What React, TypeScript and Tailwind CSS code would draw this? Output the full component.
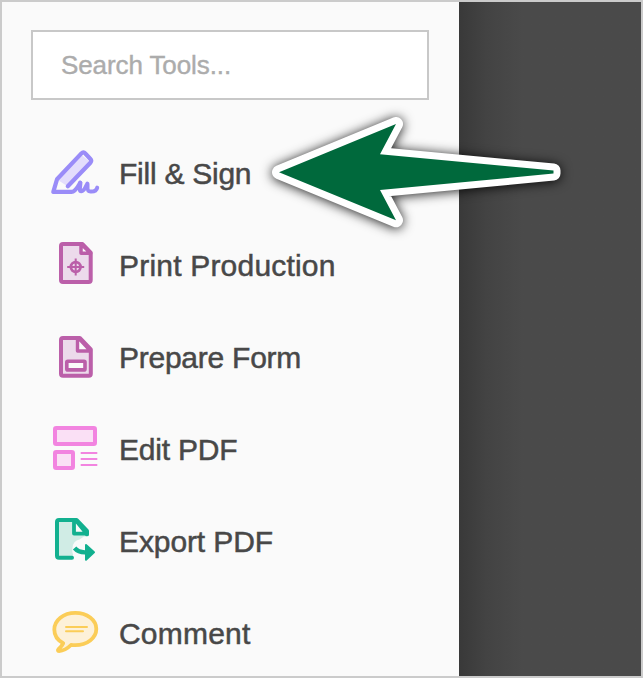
import type { ReactNode } from "react";

function Icon({ color, children }: { color: string; children: ReactNode }) {
  return (
    <svg
      width="60"
      height="60"
      viewBox="0 0 60 60"
      fill="none"
      stroke={color}
      strokeWidth="4"
      strokeLinecap="round"
      strokeLinejoin="round"
      className="shrink-0"
    >
      {children}
    </svg>
  );
}

const tools: { label: string; tracking: string; icon: ReactNode }[] = [
  {
    label: "Fill & Sign",
    tracking: "tracking-[-0.25px]",
    icon: (
      <Icon color="#9a8cf8">
        <path d="M12 35.5 35.5 10 45.5 18.5 23 42.5Z" fill="#e3ddfc" stroke="none" />
        <path d="M22.8 42.3 45.4 18.8Q47 16.8 45.4 15L40.3 9.5Q38.4 7.4 36.4 9.4L12 35.3 8.3 47.9H26.5C30.5 47.9 33 42.5 35.2 38.8" strokeWidth="4.2" />
        <path d="M35.3 38.8C36 42 33.2 47 36.3 47.2C39.5 47.4 40.6 42.5 42.4 39.6C43 42.5 41 47.4 45.6 47.6C49.6 47.8 51.6 46.6 52.2 43.6" strokeWidth="4" />
      </Icon>
    ),
  },
  {
    label: "Print Production",
    tracking: "tracking-[0.2px]",
    icon: (
      <Icon color="#bb5fa9">
        <path d="M18 8H37.5L45.7 16.7V44Q45.7 46 43.7 46H18Q16 46 16 44V10Q16 8 18 8Z" fill="#ecdaeb" />
        <path d="M36 8V17.2H45.7Z" fill="#fafafa" strokeWidth="3.5" />
        <circle cx="30.7" cy="31" r="4.8" strokeWidth="2.8" />
        <path d="M22.2 31H39.2M30.7 22.5V39.5" strokeWidth="2" strokeLinecap="butt" />
      </Icon>
    ),
  },
  {
    label: "Prepare Form",
    tracking: "tracking-[-0.25px]",
    icon: (
      <Icon color="#bb5fa9">
        <path d="M18 10H34.8L45.8 21.3V45.7Q45.8 47.7 43.8 47.7H18Q16 47.7 16 45.7V12Q16 10 18 10Z" fill="#ecdaeb" />
        <path d="M32.5 10.5V23H45.5L34 10.5Z" fill="#fafafa" strokeWidth="3.4" />
        <rect x="21.8" y="33.3" width="18.2" height="8.6" rx="1" fill="#fafafa" strokeWidth="3.6" />
      </Icon>
    ),
  },
  {
    label: "Edit PDF",
    tracking: "tracking-[-0.2px]",
    icon: (
      <Icon color="#f284e0">
        <rect x="10" y="8" width="40" height="16" rx="1.2" fill="#fae0f5" />
        <rect x="10" y="32" width="18" height="16" rx="1.2" fill="#fae0f5" />
        <path d="M35.7 33H52.3M35.7 39H52.3M35.7 45H52.3" strokeWidth="2" strokeLinecap="butt" />
      </Icon>
    ),
  },
  {
    label: "Export PDF",
    tracking: "tracking-[-0.1px]",
    icon: (
      <Icon color="#12b08f">
        <path d="M14 8H31L42 19.4V42H28V45.7H14Q12 45.7 12 43.7V10Q12 8 14 8Z" fill="#d0ece5" stroke="none" />
        <path d="M29 8.5V21.6H41.5L31 8.5Z" fill="#fafafa" strokeWidth="3.8" />
        <path d="M27 45.7H14Q12 45.7 12 43.7V10Q12 8 14 8H31.5L42 19V22.5" />
        <path
          d="M27.5 36Q28 28.5 34.5 27.5L39 24.5H52V52H29V43.5Q26.5 40.5 27.5 36Z"
          fill="#fafafa"
          stroke="none"
        />
        <path d="M29.6 36Q33.5 40.7 41 40.3" strokeWidth="4.4" strokeLinecap="butt" />
        <path d="M41 33 49 40.3 41 47.7Z" fill="#12b08f" strokeWidth="2" />
      </Icon>
    ),
  },
  {
    label: "Comment",
    tracking: "tracking-[0.2px]",
    icon: (
      <Icon color="#fbcd58">
        <path d="M18.2 39.2C12.5 36.4 9.3 31.3 9.3 25.6C9.3 16 18.5 8.9 30.3 8.9S51.3 16 51.3 25S42 41.2 30.3 41.2Q27.8 41.2 26 41C22.5 44.5 18.5 46.8 14 47Q12.1 47 13.5 45.2C15.8 43 17.5 41 18.2 39.2Z" fill="#fdf1d9" strokeWidth="3.8" />
        <path d="M21 23H42M21 27.2H38" strokeWidth="2" />
      </Icon>
    ),
  },
];

export default function App() {
  return (
    <div className="relative flex h-[678px] w-[643px] overflow-hidden border-2 border-[#cbcbcb] bg-[#4a4a4a] font-['Liberation_Sans',Arial,sans-serif]">
      <aside className="flex w-[457px] shrink-0 flex-col bg-[#fafafa] pt-7">
        <div className="ml-[29px] flex h-[70px] w-[398px] shrink-0 items-center border-2 border-[#c8c8c8] bg-white pl-7">
          <span className="text-[26px] leading-8 tracking-[-0.1px] whitespace-nowrap text-[#acacac] [-webkit-text-stroke:0.4px_#acacac]">
            Search Tools...
          </span>
        </div>
        <ul className="mt-7 flex flex-col">
          {tools.map((tool) => (
            <li key={tool.label} className="flex h-[92px] shrink-0 items-center pl-[43px]">
              {tool.icon}
              <span
                className={`ml-3.5 text-[30px] leading-9 whitespace-nowrap text-[#484848] [-webkit-text-stroke:0.5px_#484848] ${tool.tracking}`}
              >
                {tool.label}
              </span>
            </li>
          ))}
        </ul>
      </aside>
      <main className="flex-1 bg-linear-to-r from-[#393939] via-[#434343] via-15% to-[#4a4a4a] to-35%" />
      <svg
        className="absolute -top-0.5 -left-0.5 drop-shadow-[0_1px_6px_rgba(0,0,0,0.9)]"
        width="643"
        height="260"
        viewBox="0 0 643 260"
      >
        <path
          d="M279 172.3 396 124 380 154.3 553.5 170.5V173.6L380 190 396 220.3Z"
          fill="#00693c"
          stroke="#fff"
          strokeWidth="14"
          strokeLinejoin="round"
          paintOrder="stroke"
        />
      </svg>
    </div>
  );
}
